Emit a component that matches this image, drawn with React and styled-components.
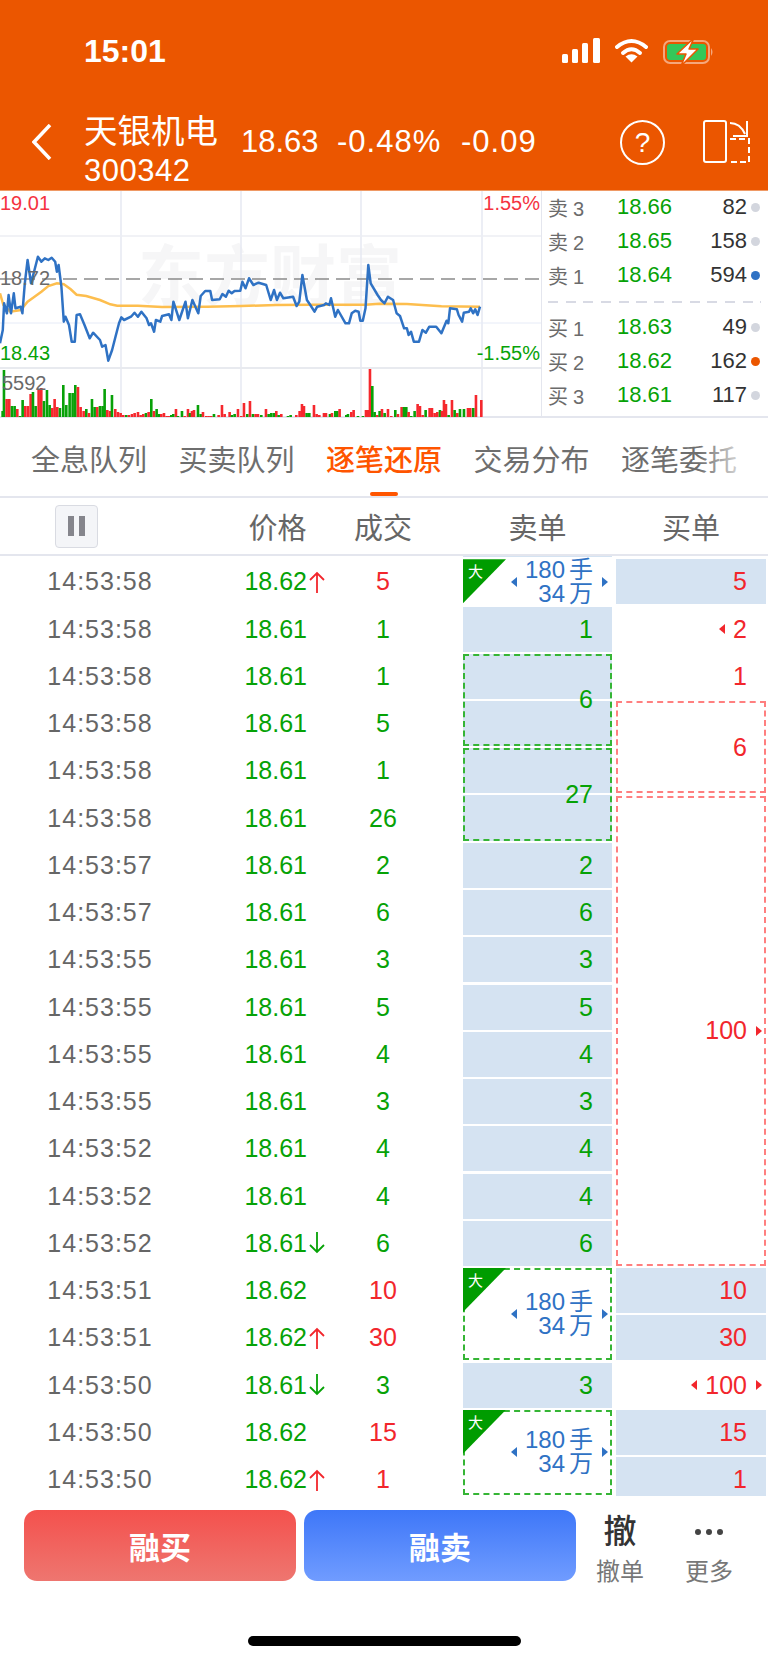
import React from "react";
import styled, { createGlobalStyle } from "styled-components";

const RED = "#f2262c";
const GREEN = "#06a206";
const BLUE = "#2f72c4";
const CELL = "#d5e3f2";
const RULE = "#e4e6ee";

const GlobalStyle = createGlobalStyle`
  html, body {
    margin: 0;
    background: #fff;
  }
  body {
    font-family: "Liberation Sans", "Noto Sans CJK SC", sans-serif;
    color: #666;
  }
`;

const TRADES = [
  ["14:53:58", "18.62", "5", "up", "buy"],
  ["14:53:58", "18.61", "1", "", "sell"],
  ["14:53:58", "18.61", "1", "", "sell"],
  ["14:53:58", "18.61", "5", "", "sell"],
  ["14:53:58", "18.61", "1", "", "sell"],
  ["14:53:58", "18.61", "26", "", "sell"],
  ["14:53:57", "18.61", "2", "", "sell"],
  ["14:53:57", "18.61", "6", "", "sell"],
  ["14:53:55", "18.61", "3", "", "sell"],
  ["14:53:55", "18.61", "5", "", "sell"],
  ["14:53:55", "18.61", "4", "", "sell"],
  ["14:53:55", "18.61", "3", "", "sell"],
  ["14:53:52", "18.61", "4", "", "sell"],
  ["14:53:52", "18.61", "4", "", "sell"],
  ["14:53:52", "18.61", "6", "down", "sell"],
  ["14:53:51", "18.62", "10", "", "buy"],
  ["14:53:51", "18.62", "30", "up", "buy"],
  ["14:53:50", "18.61", "3", "down", "sell"],
  ["14:53:50", "18.62", "15", "", "buy"],
  ["14:53:50", "18.62", "1", "up", "buy"],
];

// row: first trade row, span: rows covered, trim: px cut off the bottom
const SELL_ORDERS = [
  { row: 0, span: 1, big: true },
  { row: 1, span: 1, text: "1" },
  { row: 2, span: 2, text: "6", dash: true },
  { row: 4, span: 2, text: "27", dash: true },
  { row: 6, span: 1, text: "2" },
  { row: 7, span: 1, text: "6" },
  { row: 8, span: 1, text: "3" },
  { row: 9, span: 1, text: "5" },
  { row: 10, span: 1, text: "4" },
  { row: 11, span: 1, text: "3" },
  { row: 12, span: 1, text: "4" },
  { row: 13, span: 1, text: "4" },
  { row: 14, span: 1, text: "6" },
  { row: 15, span: 2, big: true, dash: true },
  { row: 17, span: 1, text: "3" },
  { row: 18, span: 2, big: true, dash: true, trim: 7 },
];

const BUY_ORDERS = [
  { row: 0, span: 1, text: "5", fill: true },
  { row: 1, span: 1, text: "2", before: true },
  { row: 2, span: 1, text: "1" },
  { row: 3, span: 2, text: "6", dash: true },
  { row: 5, span: 10, text: "100", after: true, dash: true },
  { row: 15, span: 1, text: "10", fill: true },
  { row: 16, span: 1, text: "30", fill: true },
  { row: 17, span: 1, text: "100", before: true, after: true },
  { row: 18, span: 1, text: "15", fill: true },
  { row: 19, span: 1, text: "1", fill: true },
];

const ASKS = [
  ["卖", "3", "18.66", "82", "#d3d6de"],
  ["卖", "2", "18.65", "158", "#d3d6de"],
  ["卖", "1", "18.64", "594", BLUE],
];

const BIDS = [
  ["买", "1", "18.63", "49", "#d3d6de"],
  ["买", "2", "18.62", "162", "#eb5600"],
  ["买", "3", "18.61", "117", "#d3d6de"],
];

const TABS = ["全息队列", "买卖队列", "逐笔还原", "交易分布", "逐笔委托"];

const PRICE_LINE = [
  [0, 460], [8, 420], [12, 340], [20, 370], [25, 315], [32, 370], [40, 310], [45, 355], [60, 350], [65, 370],
  [72, 280], [80, 210], [90, 280], [100, 240], [110, 200], [120, 215], [130, 205], [140, 210], [150, 203], [160, 215],
  [165, 245], [170, 225], [178, 290], [185, 395], [190, 380], [200, 405], [208, 455], [217, 455], [222, 375], [232, 373],
  [245, 405], [260, 445], [270, 428], [290, 450], [296, 470], [306, 465], [314, 512], [325, 480], [335, 440], [345, 400],
  [352, 382], [360, 390], [380, 380], [390, 368], [400, 380], [410, 365], [425, 385], [432, 405], [438, 400], [447, 425],
  [452, 390], [465, 395], [470, 378], [490, 373], [497, 390], [503, 335], [520, 390], [538, 335], [545, 385], [558, 330],
  [575, 370], [582, 318], [595, 303], [610, 303], [615, 330], [637, 328], [645, 312], [655, 320], [663, 302], [672, 310],
  [680, 303], [697, 302], [703, 275], [712, 295], [722, 265], [735, 285], [750, 278], [772, 285], [785, 330], [795, 300],
  [803, 330], [812, 308], [822, 325], [850, 320], [860, 348], [868, 335], [877, 255], [890, 330], [900, 345], [912, 365],
  [920, 350], [940, 345], [945, 340], [955, 345], [960, 325], [972, 380], [980, 360], [1002, 400], [1012, 400], [1020, 370],
  [1030, 362], [1040, 365], [1045, 392], [1052, 392], [1060, 355], [1068, 225], [1075, 280], [1095, 315], [1105, 330], [1115, 340],
  [1125, 320], [1140, 330], [1150, 370], [1160, 378], [1172, 415], [1180, 415], [1185, 435], [1192, 425], [1200, 455], [1215, 455],
  [1225, 420], [1235, 428], [1245, 410], [1265, 410], [1280, 430], [1295, 392], [1300, 400], [1305, 355], [1325, 358], [1330, 375],
  [1340, 395], [1345, 368], [1360, 365], [1365, 355], [1372, 370], [1378, 358], [1385, 375], [1392, 350],
];

const AVERAGE_LINE = [
  [0, 310], [10, 345], [30, 365], [60, 360], [80, 335], [100, 320], [120, 305], [140, 288], [165, 280], [185, 283],
  [205, 298], [222, 314], [250, 318], [290, 330], [320, 343], [340, 347], [400, 347], [470, 351], [600, 350], [700, 348],
  [800, 345], [900, 344], [1060, 344], [1100, 341], [1180, 342], [1280, 349], [1392, 350],
];

// volume bars as "position colour height", positions in thirds of a pixel per segment
const VOLUME_SEGMENTS = [
  [0, "4g6 8g47 16r18 24r18 32g11 40g11 48r8 56g1 64g17 72r11 80r11 88r23 95g25 103g11 112r28 120r29 128g16 137g27 145g12 153r9 160r18 168r10 176g9 186g32 195g12 205g24 214g24 222g32 230r30 238r10 247r6 255g8 263r4 272g18 280g10 288r10 296g11 304g11 310g28 318r7 326r6 332g22 342r8 350r5 358r4 366r2 375g2 383r2 392r3 400r4 410r5 418r2 426r3 434g4 442r5 450g18 458r6 466g8 474g3"],
  [160, "0r3 8r4 16r1 22r1 30g2 36g3 44r8 50g1 62g6 70r1 80r8 86g4 92r6 98r7 110g12 118g3 125r5 135r1 142r1 150r1 158g3 172r2 182r12 190r3 205r5 212g2 220g3 230r8 240r1 248r14 258g3 266r16 275g3 283r3 290r3 300g2 314r8 322g3 330g4 338g4 345r6 352g2 360r3 380g1 388g2 405r2 415r6 422r13 428r11 436g4 444g4 458r12 466r3 474r2"],
  [320, "8r4 14r4 26g3 32r4 42g6 48g6 55r8 75g2 80g3 90r5 97r7 110g1 125g1 134r7 140r7 146r48 153g31 160g5 168r2 175g6 182r8 190g4 200r8 210r1 222g7 230r3 241r10 248g10 255g10 262r5 270g1 280g6 289r13 296r11 304r2 313g7 325r9 332r9 340r4 348r5 356g7 362r6 368r17 374r13 382g2 392r17 400g7 408r4 416g8 428g8 440r9 447r9 456g9 464r22 480r17"],
];

const VOLUME_BARS = VOLUME_SEGMENTS.flatMap(([offset, spec]) =>
  spec.split(" ").map((bar) => {
    const [, pos, colour, height] = bar.match(/(\d+)([rg])(\d+)/);
    return { x: offset + Number(pos) / 3, colour: colour === "r" ? "#f5282d" : "#08a108", height: Number(height) };
  })
);

const toPolyline = (points) => points.map(([x, y]) => `${(x / 2.9).toFixed(1)},${(190 + y / 3).toFixed(1)}`).join(" ");

const Page = styled.div`
  width: 768px;
  height: 1663px;
  overflow: hidden;
  background: #fff;
`;

const Header = styled.header`
  background: #eb5600;
  height: 190px;
  border-bottom: 1px solid #ef9a66;
  color: #fff;
`;

const StatusBar = styled.div`
  height: 100px;
  display: flex;
  align-items: flex-start;
  padding-left: 84px;
`;

const Clock = styled.div`
  margin-top: 32px;
  font-size: 32px;
  line-height: 38px;
  font-weight: 700;
`;

const StatusIcons = styled.div`
  margin-left: auto;
  margin-top: 38px;
  margin-right: 54px;
  display: flex;
  align-items: flex-start;
  gap: 15px;
`;

const NavBar = styled.div`
  height: 90px;
  display: flex;
  align-items: flex-start;
  padding: 0 18px 0 32px;
`;

const BackIcon = styled.svg`
  width: 20px;
  height: 36px;
  margin-top: 24px;
`;

const Title = styled.div`
  margin-left: 32px;
  width: 157px;
  padding-top: 12px;
`;

const StockName = styled.div`
  font-size: 33.5px;
  line-height: 39px;
`;

const StockCode = styled.div`
  font-size: 31px;
  line-height: 39px;
  letter-spacing: 0.5px;
`;

const Figures = styled.div`
  display: grid;
  grid-template-columns: 96px 124px auto;
  margin-top: 24px;
  font-size: 31px;
  line-height: 36px;
`;

const Figure = styled.span`
  letter-spacing: ${(p) => p.$spacing}px;
`;

const NavActions = styled.div`
  margin-left: auto;
  margin-top: 20px;
  display: flex;
  align-items: flex-start;
  gap: 38px;
`;

const HelpButton = styled.div`
  box-sizing: border-box;
  width: 45px;
  height: 45px;
  border: 2px solid #fff;
  border-radius: 50%;
  display: flex;
  align-items: center;
  justify-content: center;
  font-size: 28px;
`;

const QuotePanel = styled.section`
  display: flex;
  height: 227px;
`;

const ChartSvg = styled.svg`
  display: block;
  width: 541px;
  height: 227px;
  flex: none;
`;

const Book = styled.div`
  flex: 1;
  border-left: 1px solid ${RULE};
  padding-left: 6px;
  border-bottom: 2px solid ${RULE};
`;

const BookRow = styled.div`
  display: grid;
  grid-template-columns: 69px 55px 75px 1fr;
  align-items: center;
  box-sizing: border-box;
  height: 34px;
  padding-bottom: 2px;
  font-size: 22px;
`;

const BookLabel = styled.span`
  font-size: 20px;
  color: #6b6b6b;
`;

const LabelDigit = styled.span`
  margin-left: 5px;
`;

const BookPrice = styled.span`
  color: ${GREEN};
  text-align: right;
`;

const BookVolume = styled.span`
  color: #333;
  text-align: right;
`;

const BookDot = styled.i`
  display: block;
  width: 9px;
  height: 9px;
  margin-left: 4px;
  border-radius: 50%;
  background: ${(p) => p.$color};
`;

const BookDivider = styled.div`
  height: 2px;
  margin: 8px 7px 8px 0;
  background: repeating-linear-gradient(90deg, #d8dae4 0 10px, transparent 10px 17.7px);
`;

const TabBar = styled.nav`
  position: relative;
  height: 80px;
  box-sizing: border-box;
  padding: 8px 0 0 31px;
  display: flex;
  align-items: center;
  gap: 31.5px;
  border-bottom: 2px solid ${RULE};

  &::after {
    content: "";
    position: absolute;
    top: 0;
    right: 0;
    bottom: 0;
    width: 70px;
    background: linear-gradient(90deg, rgba(255, 255, 255, 0), #fff 82%);
  }
`;

const Tab = styled.div`
  position: relative;
  flex: none;
  font-size: 29px;
  line-height: 40px;
  color: ${(p) => (p.$active ? "#ff5500" : "#6e6e6e")};
  font-weight: ${(p) => (p.$active ? 500 : 400)};

  &::after {
    content: "";
    display: ${(p) => (p.$active ? "block" : "none")};
    position: absolute;
    left: 44px;
    bottom: -15px;
    width: 28px;
    height: 4px;
    border-radius: 2px;
    background: #ff5500;
  }
`;

const COLUMNS = "200px 127px 112px 173px 154px";

const TableHead = styled.div`
  display: grid;
  grid-template-columns: ${COLUMNS};
  align-items: center;
  height: 58px;
  box-sizing: border-box;
  border-bottom: 2px solid ${RULE};
  font-size: 29px;
  color: #666;
`;

const PauseButton = styled.div`
  box-sizing: border-box;
  width: 43px;
  height: 43px;
  margin-left: 55px;
  display: flex;
  align-items: center;
  justify-content: center;
  gap: 5px;
  background: #f4f5f8;
  border: 1px solid #d9dbe2;
  border-radius: 4px;

  i {
    width: 6px;
    height: 20px;
    background: #85858c;
  }
`;

const HeadLabel = styled.div`
  text-align: center;
  margin: ${(p) => p.$margin || 0};
`;

const Table = styled.div`
  display: grid;
  grid-template-columns: ${COLUMNS};
  grid-template-rows: 1px repeat(20, 45px);
  row-gap: 2.25px;
  height: 940px;
  overflow: hidden;
`;

const Sliver = styled.div`
  grid-column: 4;
  grid-row: 1;
  margin-left: 24px;
  background: ${CELL};
`;

const TimeCell = styled.div`
  grid-column: 1;
  grid-row: ${(p) => p.$row};
  display: flex;
  align-items: center;
  justify-content: center;
  font-size: 25px;
  letter-spacing: 1px;
  color: #666;
`;

const PriceCell = styled.div`
  grid-column: 2;
  grid-row: ${(p) => p.$row};
  display: flex;
  align-items: center;
  justify-content: flex-end;
  font-size: 25px;
  color: ${GREEN};
`;

const Tick = styled.svg`
  width: 20px;
  height: 24px;
  flex: none;
`;

const QtyCell = styled.div`
  grid-column: 3;
  grid-row: ${(p) => p.$row};
  display: flex;
  align-items: center;
  justify-content: center;
  font-size: 25px;
  color: ${(p) => (p.$side === "buy" ? RED : GREEN)};
`;

const SellCell = styled.div`
  position: relative;
  box-sizing: border-box;
  grid-column: 4;
  grid-row: ${(p) => p.$row + 2} / span ${(p) => p.$span};
  margin: 0 0 ${(p) => p.$trim || 0}px 24px;
  padding-right: ${(p) => (p.$dash ? 17 : 19)}px;
  display: flex;
  align-items: center;
  justify-content: flex-end;
  font-size: 25px;
  color: ${GREEN};
  border: ${(p) => (p.$dash ? "2px dashed #35b535" : "none")};
  background: ${(p) => {
    if (p.$big) return "#fff";
    if (p.$dash)
      return `linear-gradient(${CELL} calc(50% - 1px), #fff 0, #fff calc(50% + 1px), ${CELL} 0)`;
    return CELL;
  }};
`;

const BuyCell = styled.div`
  box-sizing: border-box;
  grid-column: 5;
  grid-row: ${(p) => p.$row + 2} / span ${(p) => p.$span};
  margin: 0 0 0 4px;
  padding-right: ${(p) => (p.$dash ? 17 : 19)}px;
  display: flex;
  align-items: center;
  justify-content: flex-end;
  font-size: 25px;
  color: ${RED};
  background: ${(p) => (p.$fill ? CELL : "#fff")};
  border: ${(p) => (p.$dash ? "2px dashed #ff7f7f" : "none")};
`;

const Caret = styled.i`
  flex: none;
  width: 0;
  height: 0;
  border-top: 5px solid transparent;
  border-bottom: 5px solid transparent;
  ${(p) =>
    p.$dir === "left"
      ? `border-right: 6px solid ${p.$color}; margin-right: 8px;`
      : `border-left: 6px solid ${p.$color}; margin: 0 -15px 0 9px;`}
`;

const BigOrder = styled.div`
  font-size: 24px;
  line-height: 24px;
  text-align: right;
  color: ${BLUE};
`;

const Unit = styled.span`
  margin-left: 4px;
`;

const BigBadge = styled.div`
  position: absolute;
  top: ${(p) => (p.$dash ? "-2px" : 0)};
  left: ${(p) => (p.$dash ? "-2px" : 0)};
  width: 43px;
  height: 44px;
  background: #009c00;
  clip-path: polygon(0 0, 100% 0, 0 100%);
  color: #fff;
  font-size: 15px;
  line-height: 26px;
  padding-left: 5px;
  box-sizing: border-box;
`;

const ActionBar = styled.footer`
  display: flex;
  height: 71px;
  margin-top: 14px;
  padding-left: 24px;
`;

const TradeButton = styled.div`
  width: 272px;
  margin-right: 8px;
  border-radius: 13px;
  display: flex;
  align-items: center;
  justify-content: center;
  color: #fff;
  font-size: 31px;
  font-weight: 700;
  background: ${(p) =>
    p.$kind === "buy"
      ? "linear-gradient(#f4514d, #ee7670)"
      : "linear-gradient(#3e77f8, #709cff)"};
`;

const Tool = styled.div`
  width: ${(p) => p.$width}px;
  margin-left: ${(p) => p.$offset || 0}px;
  display: flex;
  flex-direction: column;
  align-items: center;
`;

const ToolGlyph = styled.div`
  flex: none;
  height: 43px;
  font-size: 33px;
  line-height: 43px;
  font-weight: 500;
  color: #333;
  display: flex;
  align-items: center;
  gap: 5px;
`;

const Dot = styled.i`
  width: 6px;
  height: 6px;
  border-radius: 50%;
  background: #444;
`;

const ToolLabel = styled.div`
  flex: none;
  margin-top: 4px;
  font-size: 24px;
  line-height: 30px;
  color: #777;
`;

const HomeIndicator = styled.div`
  width: 273px;
  height: 10px;
  margin: 55px 0 0 248px;
  border-radius: 5px;
  background: #000;
`;

const SignalBars = () => (
  <svg width="38" height="25" viewBox="0 0 38 25" style={{ display: "block" }}>
    <rect x="0" y="16" width="6" height="9" rx="1.5" fill="#fff" />
    <rect x="10" y="11" width="6" height="14" rx="1.5" fill="#fff" />
    <rect x="20" y="5" width="6" height="20" rx="1.5" fill="#fff" />
    <rect x="31" y="0" width="7" height="25" rx="1.5" fill="#fff" />
  </svg>
);

const WifiIcon = () => (
  <svg width="33" height="25" viewBox="0 0 33 25" style={{ display: "block" }}>
    <path d="M2 9 Q16.5 -3 31 9" fill="none" stroke="#fff" strokeWidth="4" strokeLinecap="round" />
    <path d="M8 15 Q16.5 7.5 25 15" fill="none" stroke="#fff" strokeWidth="4" strokeLinecap="round" />
    <path d="M16.5 24.5 L10.5 18.5 Q16.5 14 22.5 18.5 Z" fill="#fff" />
  </svg>
);

const BatteryIcon = () => (
  <svg width="51" height="28" viewBox="0 0 51 28" style={{ display: "block" }}>
    <rect x="1" y="3" width="45" height="22" rx="6" fill="none" stroke="#f5a77c" strokeWidth="2" />
    <path d="M48 10 q3 4 0 8 z" fill="#f5a77c" />
    <rect x="4" y="6" width="39" height="16" rx="3" fill="#34c759" />
    <path d="M31 0 L14 16 L23 16 L18 28 L35 11 L26 11 Z" fill="#fff" stroke="#eb5600" strokeWidth="1.5" strokeLinejoin="round" />
  </svg>
);

const RotateIcon = () => (
  <svg width="47" height="43" viewBox="703 120 47 43" style={{ display: "block" }}>
    <rect x="704" y="121" width="22" height="41" rx="2" fill="none" stroke="#fff" strokeWidth="2" />
    <path d="M730 139 H749 V162 H730" fill="none" stroke="#fff" strokeWidth="2" strokeDasharray="6 3" />
    <path d="M730 123 Q740 123 745 134" fill="none" stroke="#fff" strokeWidth="2" />
    <path d="M747 121 V136 H733" fill="none" stroke="#fff" strokeWidth="2" />
  </svg>
);

const TrendChart = () => (
  <ChartSvg viewBox="0 191 541 227">
    <text x="138" y="300" fontSize="66" fontWeight="700" fill="#f6f6f7" fontFamily='"Noto Sans CJK SC", sans-serif'>
      东方财富
    </text>
    {[121, 241, 361, 482].map((x) => (
      <React.Fragment key={x}>
        <line x1={x} x2={x} y1="191" y2="367" stroke="#e6e9f2" strokeWidth="1.5" />
        <line x1={x} x2={x} y1="369" y2="418" stroke="#e6e9f2" strokeWidth="1.5" />
      </React.Fragment>
    ))}
    <line x1="0" x2="541" y1="236" y2="236" stroke="#eceef3" strokeWidth="1.5" />
    <line x1="0" x2="541" y1="323" y2="323" stroke="#e6ebf7" strokeWidth="1" />
    <line x1="0" x2="541" y1="368" y2="368" stroke="#e8eaef" strokeWidth="2" />
    <line x1="0" x2="541" y1="279" y2="279" stroke="#8a8a8a" strokeWidth="1.5" strokeDasharray="14 7" />
    <line x1="0" x2="541" y1="417" y2="417" stroke={RULE} strokeWidth="2" />
    {VOLUME_BARS.map((bar, i) => (
      <rect key={i} x={bar.x} y={417 - bar.height} width="2.6" height={bar.height} fill={bar.colour} />
    ))}
    <polyline points={toPolyline(AVERAGE_LINE)} fill="none" stroke="#fdbe4e" strokeWidth="2.5" />
    <polyline points={toPolyline(PRICE_LINE)} fill="none" stroke={BLUE} strokeWidth="2.5" strokeLinejoin="round" />
    <g fontSize="20" fontFamily='"Liberation Sans", sans-serif'>
      <text x="0" y="210" fill="#f5333f">19.01</text>
      <text x="540" y="210" textAnchor="end" fill="#f5333f">1.55%</text>
      <text x="0" y="285" fill="#6a6a6a">18.72</text>
      <text x="0" y="360" fill={GREEN}>18.43</text>
      <text x="540" y="360" textAnchor="end" fill={GREEN}>-1.55%</text>
      <text x="2" y="390" fill="#6a6a6a">5592</text>
    </g>
  </ChartSvg>
);

const BookLine = ({ label, level, price, volume, dot }) => (
  <BookRow>
    <BookLabel>
      {label}
      <LabelDigit>{level}</LabelDigit>
    </BookLabel>
    <BookPrice>{price}</BookPrice>
    <BookVolume>{volume}</BookVolume>
    <BookDot $color={dot} />
  </BookRow>
);

const Arrow = ({ dir }) => (
  <Tick viewBox="0 0 20 24">
    {dir === "up" ? (
      <path d="M10 23 V3 M3 10 L10 3 L17 10" fill="none" stroke={RED} strokeWidth="1.8" />
    ) : (
      <path d="M10 1 V21 M3 14 L10 21 L17 14" fill="none" stroke={GREEN} strokeWidth="1.8" />
    )}
  </Tick>
);

const App = () => (
  <Page>
    <GlobalStyle />
    <Header>
      <StatusBar>
        <Clock>15:01</Clock>
        <StatusIcons>
          <SignalBars />
          <WifiIcon />
          <BatteryIcon />
        </StatusIcons>
      </StatusBar>
      <NavBar>
        <BackIcon viewBox="0 0 20 36">
          <polyline points="18,1 2,18 18,35" fill="none" stroke="#fff" strokeWidth="3.5" />
        </BackIcon>
        <Title>
          <StockName>天银机电</StockName>
          <StockCode>300342</StockCode>
        </Title>
        <Figures>
          <Figure $spacing={0}>18.63</Figure>
          <Figure $spacing={1}>-0.48%</Figure>
          <Figure $spacing={1}>-0.09</Figure>
        </Figures>
        <NavActions>
          <HelpButton>?</HelpButton>
          <RotateIcon />
        </NavActions>
      </NavBar>
    </Header>

    <QuotePanel>
      <TrendChart />
      <Book>
        {ASKS.map(([label, level, price, volume, dot]) => (
          <BookLine key={label + level} label={label} level={level} price={price} volume={volume} dot={dot} />
        ))}
        <BookDivider />
        {BIDS.map(([label, level, price, volume, dot]) => (
          <BookLine key={label + level} label={label} level={level} price={price} volume={volume} dot={dot} />
        ))}
      </Book>
    </QuotePanel>

    <TabBar>
      {TABS.map((tab) => (
        <Tab key={tab} $active={tab === "逐笔还原"}>
          {tab}
        </Tab>
      ))}
    </TabBar>

    <TableHead>
      <PauseButton>
        <i />
        <i />
      </PauseButton>
      <HeadLabel $margin="0 0 0 28px">价格</HeadLabel>
      <HeadLabel>成交</HeadLabel>
      <HeadLabel $margin="0 0 0 24px">卖单</HeadLabel>
      <HeadLabel $margin="0 0 0 4px">买单</HeadLabel>
    </TableHead>

    <Table>
      <Sliver />
      {TRADES.map(([time, price, qty, tick, side], i) => (
        <React.Fragment key={i}>
          <TimeCell $row={i + 2}>{time}</TimeCell>
          <PriceCell $row={i + 2}>
            {price}
            {tick ? <Arrow dir={tick} /> : <Tick as="span" />}
          </PriceCell>
          <QtyCell $row={i + 2} $side={side}>
            {qty}
          </QtyCell>
        </React.Fragment>
      ))}
      {SELL_ORDERS.map((order) => (
        <SellCell
          key={order.row}
          $row={order.row}
          $span={order.span}
          $dash={order.dash}
          $big={order.big}
          $trim={order.trim}
        >
          {order.big ? (
            <>
              <BigBadge $dash={order.dash}>大</BigBadge>
              <Caret $dir="left" $color={BLUE} />
              <BigOrder>
                <div>
                  180<Unit>手</Unit>
                </div>
                <div>
                  34<Unit>万</Unit>
                </div>
              </BigOrder>
              <Caret $dir="right" $color={BLUE} />
            </>
          ) : (
            order.text
          )}
        </SellCell>
      ))}
      {BUY_ORDERS.map((order) => (
        <BuyCell key={order.row} $row={order.row} $span={order.span} $dash={order.dash} $fill={order.fill}>
          {order.before && <Caret $dir="left" $color={RED} />}
          {order.text}
          {order.after && <Caret $dir="right" $color={RED} />}
        </BuyCell>
      ))}
    </Table>

    <ActionBar>
      <TradeButton $kind="buy">融买</TradeButton>
      <TradeButton $kind="sell">融卖</TradeButton>
      <Tool $width={88} $offset={-8}>
        <ToolGlyph>撤</ToolGlyph>
        <ToolLabel>撤单</ToolLabel>
      </Tool>
      <Tool $width={90}>
        <ToolGlyph>
          <Dot />
          <Dot />
          <Dot />
        </ToolGlyph>
        <ToolLabel>更多</ToolLabel>
      </Tool>
    </ActionBar>

    <HomeIndicator />
  </Page>
);

export default App;
